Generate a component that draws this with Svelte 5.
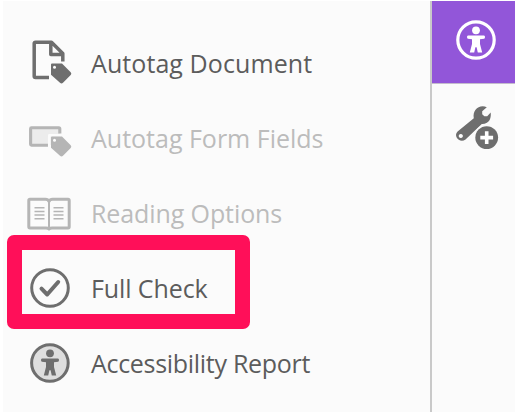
<script>
  const items = [
    { label: 'Autotag Document', icon: 'document', spacing: 0.08 },
    { label: 'Autotag Form Fields', icon: 'form', spacing: 0, disabled: true },
    { label: 'Reading Options', icon: 'book', spacing: -0.1, disabled: true },
    { label: 'Full Check', icon: 'check', spacing: -0.1, highlighted: true },
    { label: 'Accessibility Report', icon: 'person', spacing: -0.3 }
  ];
</script>

{#snippet tag()}
  <path d="M26 24.5H36L44.7 33.2Q46 34.6 44.7 36L37 43.8Q35.5 45.2 34 43.8L25 35.8V25.5Q25 24.5 26 24.5Z" fill="currentColor" />
  <circle cx="28.5" cy="28.3" r="1.5" fill="#fbfbfb" />
{/snippet}

{#snippet person()}
  <circle cx="24" cy="14.3" r="3.9" fill="currentColor" />
  <path d="M16 19.5H32Q33 19.5 33 21T32 22.7L28 23.3V28L30.2 36.6H25.8L24.6 31.2H23.4L22.2 36.6H17.8L20 28V23.3L16 22.7Q15 22.5 15 21T16 19.5Z" fill="currentColor" />
{/snippet}

<main>
  <nav class="tools">
    {#each items as item}
      <div class="item" class:disabled={item.disabled}>
        <svg width="48" height="48" viewBox="0 0 48 48" fill="none" stroke-linejoin="round">
          {#if item.icon === 'document'}
            <path d="M23 38.5H9.5Q8.2 38.5 8.2 37.2V4.5Q8.2 3.2 9.5 3.2H25.5L36.8 14.5V22.5M24.8 3.8V15.5H36.3" stroke="currentColor" stroke-width="3.5" />
            {@render tag()}
          {:else if item.icon === 'form'}
            <path d="M5 14H33.8V31H4.6V14Z" fill="#ececec" />
            <path d="M22.5 31.2H5.5Q4.6 31.2 4.6 30.3V14.7Q4.6 13.8 5.5 13.8H32.8Q33.8 13.8 33.8 14.8V19.5" stroke="currentColor" stroke-width="3.1" />
            <path d="M23.2 33V21.3H36" stroke="#fbfbfb" stroke-width="2.5" />
            <g transform="translate(0 -2)">{@render tag()}</g>
          {:else if item.icon === 'book'}
            <path d="M23 12.5Q22 10.2 19.5 10.2H4Q2.8 10.2 2.8 11.4V37.8Q2.8 39 4 39H20Q22 39 23 40Q24 39 26 39H42Q43.2 39 43.2 37.8V11.4Q43.2 10.2 42 10.2H26.5Q24 10.2 23 12.5Z" stroke="currentColor" stroke-width="3" />
            <path d="M23 11V39" stroke="currentColor" stroke-width="2" />
            <path d="M8.5 18.7h10M8.5 22.4h10M8.5 26.1h10M8.5 29.8h10M27.5 18.7h10M27.5 22.4h10M27.5 26.1h10M27.5 29.8h10" stroke="currentColor" stroke-width="1.5" />
          {:else if item.icon === 'check'}
            <circle cx="24" cy="24" r="18.3" stroke="currentColor" stroke-width="3" />
            <path d="M15.5 24.6L21.2 30.5L32.2 18" stroke="currentColor" stroke-width="4" stroke-linecap="round" />
          {:else}
            <circle cx="23.9" cy="24" r="18.3" fill="#dedede" stroke="currentColor" stroke-width="3" />
            {@render person()}
          {/if}
        </svg>
        <span style="letter-spacing: {item.spacing}px">{item.label}</span>
        {#if item.highlighted}<div class="highlight"></div>{/if}
      </div>
    {/each}
  </nav>
  <aside>
    <div class="active">
      <svg width="48" height="48" viewBox="0 0 48 48" fill="none">
        <circle cx="24" cy="24" r="18.2" stroke="currentColor" stroke-width="3.2" />
        {@render person()}
      </svg>
    </div>
    <svg class="wrench" width="48" height="48" viewBox="0 0 48 48">
      <path fill-rule="evenodd" d="M34.8 3.2L30.2 7.2V10.2L32.4 12.3H35.2L38.7 8.6C39.5 15.5 36.5 20.3 29.8 20L13.5 35.5C8 39.6.8 32.6 5.6 27.6L21.8 14.2C20.3 6.3 27 0 34.8 3.2ZM8.8 29.9a2.1 2.1 0 1 0 .01 0Z" fill="#6e6e6e" />
      <circle cx="34.7" cy="33.6" r="13" fill="#fbfbfb" />
      <circle cx="34.7" cy="33.6" r="11.4" fill="#6e6e6e" />
      <path d="M34.7 27.2v12.8M28.3 33.6h12.8" stroke="#fff" stroke-width="3.6" />
    </svg>
  </aside>
</main>

<style>
  :global(body) { background: #fff; overflow: hidden; }
  main {
    box-sizing: border-box;
    width: 516px;
    height: 412px;
    padding: 1px 1px 0 3px;
    display: flex;
    font-family: "Open Sans", "Noto Sans", sans-serif;
  }
  .tools { box-sizing: border-box; flex: 1; padding: 24px 0 0 23px; background: #fbfbfb; }
  .item { position: relative; height: 75px; display: flex; align-items: center; gap: 17px; color: #6e6e6e; }
  .item svg { flex: none; }
  .item span { color: #5c5c5c; font-size: 25px; line-height: 34px; white-space: nowrap; }
  .item.disabled { color: #b5b5b5; }
  .item.disabled span { color: #bcbcbc; }
  .highlight {
    position: absolute;
    box-sizing: border-box;
    left: -19px;
    top: -15px;
    width: 243px;
    height: 94px;
    border: 15px solid #ff0f59;
    border-radius: 7px;
  }
  aside { box-sizing: border-box; width: 85px; border-left: 2px solid #c9c9c9; background: #fbfbfb; }
  .active { display: flex; box-sizing: border-box; height: 83px; padding: 15px 0 0 20px; color: #fff; background: #9256d9; border-bottom: 1px solid #c4bccd; }
  .wrench { display: block; margin: 20px 0 0 20px; }
</style>
